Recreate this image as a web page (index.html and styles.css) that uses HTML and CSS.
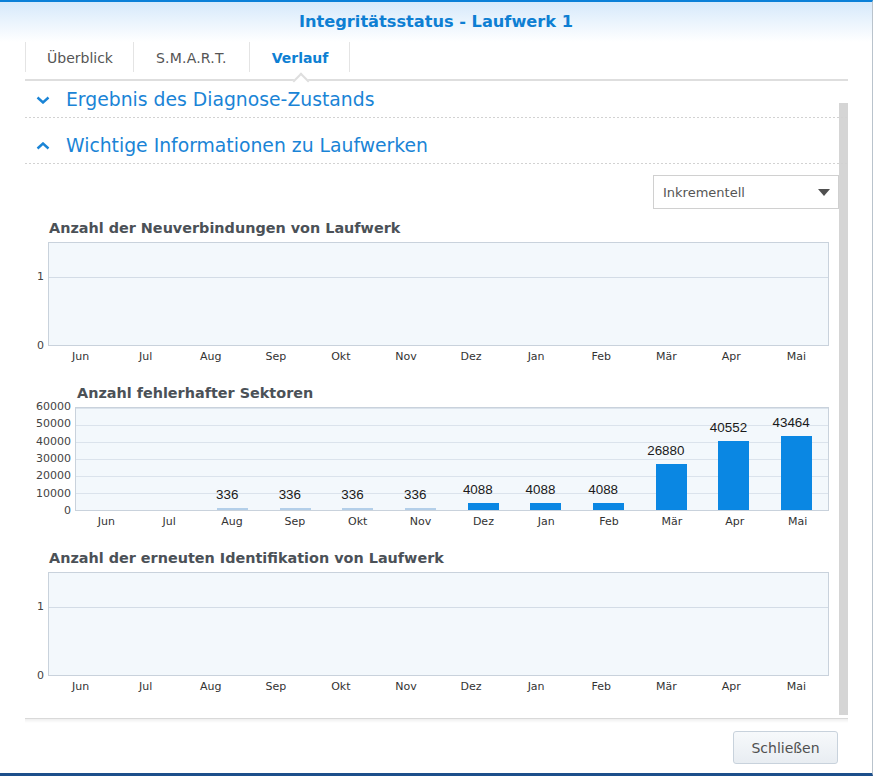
FILE: index.html
```html
<!DOCTYPE html>
<html lang="de">
<head>
<meta charset="utf-8">
<title>Integritätsstatus - Laufwerk 1</title>
<link rel="stylesheet" href="styles.css">
</head>
<body>
<div class="window">
  <header class="titlebar"><h1 class="title">Integritätsstatus - Laufwerk 1</h1></header>
  <nav class="tabs">
    <div class="tab first">Überblick</div>
    <div class="tab smart">S.M.A.R.T.</div>
    <div class="tab active">Verlauf</div>
  </nav>
  <main class="content">
    <div class="scrollbar"></div>
    <div class="acc-head">
      <svg class="chev" width="14" height="8" viewBox="0 0 14 8"><polyline points="1.5,1.5 7,6.5 12.5,1.5"/></svg>
      <span>Ergebnis des Diagnose-Zustands</span>
    </div>
    <div class="acc-head tall">
      <svg class="chev" width="14" height="8" viewBox="0 0 14 8"><polyline points="1.5,6.5 7,1.5 12.5,6.5"/></svg>
      <span>Wichtige Informationen zu Laufwerken</span>
    </div>
    <div class="toolbar">
      <div class="select"><span>Inkrementell</span><span class="caret"></span></div>
    </div>

    <div class="chart chart-small first-chart">
      <div class="chart-title">Anzahl der Neuverbindungen von Laufwerk</div>
      <div class="yaxis">
        <span class="ylab" style="bottom:0%">0</span>
        <span class="ylab" style="bottom:66.35%">1</span>
      </div>
      <div class="plot grid-one"></div>
      <div class="xaxis"><span>Jun</span><span>Jul</span><span>Aug</span><span>Sep</span><span>Okt</span><span>Nov</span><span>Dez</span><span>Jan</span><span>Feb</span><span>Mär</span><span>Apr</span><span>Mai</span></div>
    </div>

    <div class="chart chart-wide">
      <div class="chart-title">Anzahl fehlerhafter Sektoren</div>
      <div class="yaxis">
        <span class="ylab" style="bottom:0%">0</span>
        <span class="ylab" style="bottom:16.667%">10000</span>
        <span class="ylab" style="bottom:33.333%">20000</span>
        <span class="ylab" style="bottom:50%">30000</span>
        <span class="ylab" style="bottom:66.667%">40000</span>
        <span class="ylab" style="bottom:83.333%">50000</span>
        <span class="ylab" style="bottom:100%">60000</span>
      </div>
      <div class="plot grid-six">
        <div class="col"></div>
        <div class="col"></div>
        <div class="col"><span class="val">336</span><span class="bar thin" style="height:2px"></span></div>
        <div class="col"><span class="val">336</span><span class="bar thin" style="height:2px"></span></div>
        <div class="col"><span class="val">336</span><span class="bar thin" style="height:2px"></span></div>
        <div class="col"><span class="val">336</span><span class="bar thin" style="height:2px"></span></div>
        <div class="col"><span class="val">4088</span><span class="bar" style="height:7px"></span></div>
        <div class="col"><span class="val">4088</span><span class="bar" style="height:7px"></span></div>
        <div class="col"><span class="val">4088</span><span class="bar" style="height:7px"></span></div>
        <div class="col"><span class="val">26880</span><span class="bar" style="height:45.7px"></span></div>
        <div class="col"><span class="val">40552</span><span class="bar" style="height:68.9px"></span></div>
        <div class="col"><span class="val">43464</span><span class="bar" style="height:73.9px"></span></div>
      </div>
      <div class="xaxis"><span>Jun</span><span>Jul</span><span>Aug</span><span>Sep</span><span>Okt</span><span>Nov</span><span>Dez</span><span>Jan</span><span>Feb</span><span>Mär</span><span>Apr</span><span>Mai</span></div>
    </div>

    <div class="chart chart-small">
      <div class="chart-title">Anzahl der erneuten Identifikation von Laufwerk</div>
      <div class="yaxis">
        <span class="ylab" style="bottom:0%">0</span>
        <span class="ylab" style="bottom:66.35%">1</span>
      </div>
      <div class="plot grid-one"></div>
      <div class="xaxis"><span>Jun</span><span>Jul</span><span>Aug</span><span>Sep</span><span>Okt</span><span>Nov</span><span>Dez</span><span>Jan</span><span>Feb</span><span>Mär</span><span>Apr</span><span>Mai</span></div>
    </div>
  </main>
  <footer class="footer">
    <button class="btn" type="button">Schließen</button>
  </footer>
</div>
</body>
</html>
```

FILE: styles.css
```css
* { box-sizing: border-box; }
html, body { margin: 0; padding: 0; background: #fff; }
body { font-family: "DejaVu Sans", Verdana, sans-serif; color: #444; }

.window {
  width: 873px;
  height: 776px;
  border-top: 2px solid #0b80d8;
  border-bottom: 3px solid #1c4f8b;
  border-right: 1px solid #b9c3cc;
  display: flex;
  flex-direction: column;
  overflow: hidden;
  background: #fff;
}

.titlebar {
  flex: none;
  height: 40px;
  background: linear-gradient(#d6e9fb, #ffffff);
  text-align: center;
}
.title {
  margin: 0;
  font-size: 16.2px;
  font-weight: bold;
  line-height: 40px;
  color: #0e7fd3;
}

.tabs {
  flex: none;
  display: flex;
  height: 39px;
  margin: 0 24px 0 25px;
  border-bottom: 2px solid #dedede;
}
.tab {
  position: relative;
  height: 30px;
  line-height: 33px;
  padding: 0 21px;
  border-right: 1px solid #e4e4e4;
  font-size: 14px;
  color: #555;
}
.tab.first { border-left: 1px solid #e4e4e4; padding: 0 20px 0 21px; }
.tab.smart { padding: 0 22px 0 22px; letter-spacing: 0.2px; }
.tab.active { color: #0e7fd3; font-weight: bold; padding: 0 21px 0 22px; }
.tab.active::after {
  content: "";
  position: absolute;
  left: 50%;
  top: 33px;
  width: 10px;
  height: 10px;
  margin-left: -5px;
  background: #fff;
  border-left: 2px solid #dedede;
  border-top: 2px solid #dedede;
  transform: rotate(45deg);
}

.content {
  position: relative;
  flex: 1;
  margin: 0 24px 0 25px;
  overflow: hidden;
}
.scrollbar {
  position: absolute;
  right: 0;
  top: 22px;
  bottom: 3px;
  width: 9px;
  background: #d5d5d5;
}

.acc-head {
  position: relative;
  z-index: 1;
  display: flex;
  align-items: flex-end;
  height: 37px;
  padding: 0 0 6px 11px;
  background: linear-gradient(to right, #d2d2d2 50%, transparent 50%) left bottom / 4px 1px repeat-x;
  font-size: 18.8px;
  line-height: 24px;
  color: #1a84d6;
}
.acc-head.tall { height: 46px; }
.chev {
  flex: none;
  margin: 0 16px 8px 0;
}
.chev polyline {
  fill: none;
  stroke: #1a84d6;
  stroke-width: 2.4;
}

.toolbar {
  display: flex;
  justify-content: flex-end;
  margin: 11px 9px 0 0;
}
.select {
  width: 186px;
  height: 34px;
  border: 1px solid #d0d0d0;
  display: flex;
  align-items: center;
  justify-content: space-between;
  padding: 0 8px 0 9px;
  font-size: 13px;
  color: #555;
}
.caret {
  width: 0;
  height: 0;
  border-left: 6.5px solid transparent;
  border-right: 6.5px solid transparent;
  border-top: 7px solid #505050;
}

.chart {
  display: grid;
  grid-template-rows: auto 104px auto;
  margin: 20px 19px 0 0;
}
.chart.first-chart { margin-top: 10px; }
.chart-small { grid-template-columns: 23px 1fr; }
.chart-wide { grid-template-columns: 50px 1fr; }

.chart-title {
  grid-column: 2;
  grid-row: 1;
  font-size: 14.4px;
  font-weight: bold;
  line-height: 18px;
  color: #4b5157;
  margin-bottom: 5px;
  padding-left: 1px;
  white-space: nowrap;
}
.chart-wide .chart-title { padding-left: 2px; }

.yaxis {
  grid-column: 1;
  grid-row: 2;
  position: relative;
}
.ylab {
  position: absolute;
  right: 4px;
  font-size: 11px;
  line-height: 12px;
  color: #444;
  transform: translateY(50%);
}

.plot {
  grid-column: 2;
  grid-row: 2;
  border: 1px solid #c9d2dc;
  background-color: #f3f8fc;
  display: grid;
  grid-template-columns: repeat(12, 1fr);
}
.plot.grid-one {
  background-image: linear-gradient(to top, transparent 67px, #d3dce6 67px, #d3dce6 68px, transparent 68px);
}
.plot.grid-six {
  background-image: repeating-linear-gradient(to top, transparent 0, transparent 16px, #dbe3ec 16px, #dbe3ec 17px);
}
.col {
  display: flex;
  flex-direction: column;
  justify-content: flex-end;
  align-items: center;
}
.val {
  font-family: "Liberation Sans", Arial, sans-serif;
  font-size: 13.4px;
  line-height: 15px;
  color: #1a1a1a;
  margin: 0 11px 6px 0;
}
.bar {
  width: 31px;
  background: #0a87e3;
}
.bar.thin { background: #b3cfe9; }

.xaxis {
  grid-column: 2;
  grid-row: 3;
  display: grid;
  grid-template-columns: repeat(12, 1fr);
  margin-top: 4px;
  text-align: center;
  font-size: 11px;
  line-height: 14px;
  color: #333;
}

.footer {
  flex: none;
  height: 55px;
  margin: 0 24px 0 25px;
  border-top: 1px solid #d9d9d9;
  background: linear-gradient(#efefef, #ffffff 4px);
  display: flex;
  justify-content: flex-end;
  align-items: flex-start;
  padding: 12px 10px 0 0;
}
.btn {
  width: 105px;
  height: 33px;
  border: 1px solid #c8d2dc;
  border-radius: 3px;
  background: linear-gradient(#f7f9fb, #e8edf2);
  font-family: "DejaVu Sans", Verdana, sans-serif;
  font-size: 14px;
  color: #505050;
  padding: 0;
}
```
